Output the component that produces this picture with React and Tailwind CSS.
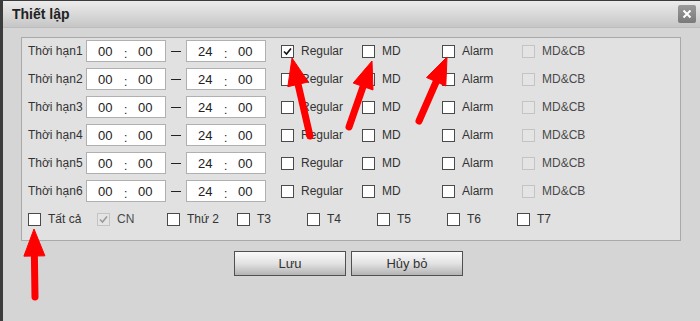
const periods = [1, 2, 3, 4, 5, 6]
const days = [
    { label: 'Tất cả', w: 'w-[69px]' },
    { label: 'CN', w: 'w-[70px]', disabled: true, checked: true },
    { label: 'Thứ 2', w: 'w-[70px]' },
    { label: 'T3', w: 'w-[70px]' },
    { label: 'T4', w: 'w-[70px]' },
    { label: 'T5', w: 'w-[70px]' },
    { label: 'T6', w: 'w-[70px]' },
    { label: 'T7', w: 'w-[70px]' },
]

function Check({ checked, disabled }) {
    return (
        <span
            className={`w-[13px] h-[13px] shrink-0 flex items-center justify-center border ${disabled ? 'border-[#c4c4c4] bg-[#e4e4e4]' : 'border-[#4a4a4a] bg-white'}`}
        >
            {checked && (
                <svg width="11" height="11" viewBox="0 0 11 11">
                    <path d="M2 5.5 L4.5 8 L9 2.5" fill="none" stroke={disabled ? '#9a9a9a' : '#111'} strokeWidth="1.6" />
                </svg>
            )}
        </span>
    )
}

function Option({ label, checked, disabled, w }) {
    return (
        <div className={`flex items-center gap-[7px] ${w}`}>
            <Check checked={checked} disabled={disabled} />
            <span className={disabled ? 'text-[#4a4a4a]' : 'text-[#333]'}>{label}</span>
        </div>
    )
}

function TimeBox({ h }) {
    return (
        <div className="w-[80px] h-[22px] bg-white border border-[#b0b0b0] flex items-start text-[13px] text-[#222] pt-[1px]">
            <span className="w-[11px]" />
            <span className="w-[26px]">{h}</span>
            <span className="w-[14px] text-[12px] pt-[3px]">:</span>
            <span>00</span>
        </div>
    )
}

function Arrow({ x1, y1, x2, y2 }) {
    const dx = x2 - x1
    const dy = y2 - y1
    const len = Math.hypot(dx, dy)
    const ux = dx / len
    const uy = dy / len
    const h = 27
    const w = 10.5
    const bx = x2 - ux * h
    const by = y2 - uy * h
    const nx = -uy
    const ny = ux
    const pts = `${x2},${y2} ${bx + nx * w},${by + ny * w} ${bx - nx * w},${by - ny * w}`
    return (
        <g fill="#ff0000" stroke="#ff0000">
            <line x1={x1} y1={y1} x2={bx + ux * 3} y2={by + uy * 3} strokeWidth="7" strokeLinecap="round" />
            <polygon points={pts} strokeWidth="1" strokeLinejoin="round" />
        </g>
    )
}

export default function App() {
    return (
        <div className="relative w-[700px] h-[321px] overflow-hidden bg-[#d5d5d5] text-[12px] font-['Liberation_Sans',Arial,sans-serif] border-l-[3px] border-t border-[#3c3c3c]">
            {/* Title bar */}
            <div className="h-[27px] flex items-center justify-between pl-[9px] pr-[4px] bg-gradient-to-b from-[#ececec] to-[#c6c6c6] border-b border-[#bdbdbd]">
                <span className="font-bold text-[14px] text-[#222]">Thiết lập</span>
                <span className="w-[18px] h-[18px] rounded-[2px] bg-gradient-to-b from-[#9a9a9a] to-[#7a7a7a] flex items-center justify-center">
                    <svg width="10" height="10" viewBox="0 0 10 10">
                        <path d="M1.5 1.5 L8.5 8.5 M8.5 1.5 L1.5 8.5" stroke="#fff" strokeWidth="2" />
                    </svg>
                </span>
            </div>

            {/* Settings panel */}
            <div className="ml-[18px] mt-[9px] w-[660px] h-[204px] bg-[#e1e1e1] border border-[#a9a9a9] pl-[6px] flex flex-col">
                <div className="-mt-px flex flex-col">
                    {periods.map(n => (
                        <div key={n} className="h-[28px] flex items-center text-[#333]">
                            <span className="w-[58px]">Thời hạn{n}</span>
                            <TimeBox h="00" />
                            <span className="w-[20px] flex justify-center">
                                <span className="w-[10px] h-px bg-[#222]" />
                            </span>
                            <TimeBox h="24" />
                            <span className="w-[15px]" />
                            <Option label="Regular" checked={n === 1} w="w-[81px]" />
                            <Option label="MD" w="w-[80px]" />
                            <Option label="Alarm" w="w-[80px]" />
                            <Option label="MD&CB" disabled w="w-[80px]" />
                        </div>
                    ))}
                    <div className="h-[28px] flex items-center">
                        {days.map(d => (
                            <Option key={d.label} label={d.label} checked={d.checked} disabled={d.disabled} w={d.w} />
                        ))}
                    </div>
                </div>
            </div>

            {/* Buttons */}
            <div className="mt-[10px] ml-[231px] flex gap-[5px]">
                <button className="w-[112px] h-[25px] border border-[#505050] bg-gradient-to-b from-[#fafafa] via-[#e2e2e2] to-[#b4b4b4] text-[13px] text-[#333]">
                    Lưu
                </button>
                <button className="w-[112px] h-[25px] border border-[#505050] bg-gradient-to-b from-[#fafafa] via-[#e2e2e2] to-[#b4b4b4] text-[13px] text-[#333]">
                    Hủy bỏ
                </button>
            </div>

            {/* Annotation arrows */}
            <svg className="absolute left-[-3px] top-[-1px] pointer-events-none" width="700" height="321">
                <Arrow x1={310} y1={136} x2={292} y2={58} />
                <Arrow x1={349} y1={127} x2={372} y2={61} />
                <Arrow x1={419} y1={121} x2={447} y2={57} />
                <Arrow x1={35} y1={297} x2={34} y2={229} />
            </svg>
        </div>
    )
}
